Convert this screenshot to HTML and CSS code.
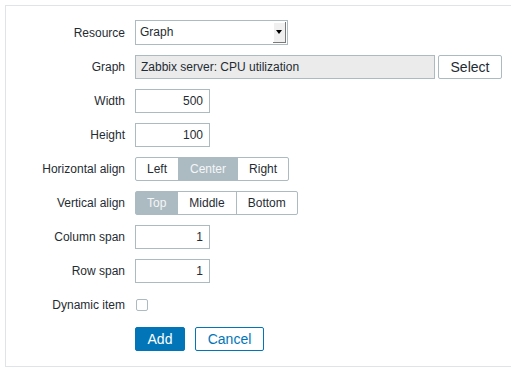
FILE: index.html
```html
<!DOCTYPE html>
<html lang="en">
<head>
  <meta charset="UTF-8">
  <meta name="viewport" content="width=device-width, initial-scale=1">
  <title>Edit widget</title>
  <link rel="stylesheet" href="styles.css">
</head>
<body>
  <div class="dialog">
    <form class="form-grid">
      <label class="form-label">Resource</label>
      <div class="form-field">
        <div class="select">
          <span class="select-value">Graph</span>
          <span class="select-arrow"></span>
        </div>
      </div>

      <label class="form-label">Graph</label>
      <div class="form-field">
        <input type="text" class="input input-readonly" value="Zabbix server: CPU utilization" readonly>
        <button type="button" class="btn btn-grey">Select</button>
      </div>

      <label class="form-label">Width</label>
      <div class="form-field"><input type="text" class="input input-num" value="500"></div>

      <label class="form-label">Height</label>
      <div class="form-field"><input type="text" class="input input-num" value="100"></div>

      <label class="form-label">Horizontal align</label>
      <div class="form-field">
        <ul class="segmented">
          <li>Left</li>
          <li class="selected">Center</li>
          <li>Right</li>
        </ul>
      </div>

      <label class="form-label">Vertical align</label>
      <div class="form-field">
        <ul class="segmented">
          <li class="selected">Top</li>
          <li>Middle</li>
          <li>Bottom</li>
        </ul>
      </div>

      <label class="form-label">Column span</label>
      <div class="form-field"><input type="text" class="input input-num" value="1"></div>

      <label class="form-label">Row span</label>
      <div class="form-field"><input type="text" class="input input-num" value="1"></div>

      <label class="form-label">Dynamic item</label>
      <div class="form-field"><span class="checkbox"></span></div>

      <span></span>
      <div class="form-field form-actions">
        <button type="button" class="btn btn-blue">Add</button>
        <button type="button" class="btn btn-alt">Cancel</button>
      </div>
    </form>
  </div>
</body>
</html>
```

FILE: styles.css
```css
body { margin: 0; background: #fff; overflow: hidden; font-family: "Liberation Sans", Arial, sans-serif; font-size: 12px; color: #1f2c33; }
.dialog { margin: 5px 0 0 5px; width: 530px; border: 1px solid #dfe4e7; padding: 14px 0 15px 0; box-sizing: border-box; }
.form-grid { display: grid; grid-template-columns: 119px auto; column-gap: 10px; row-gap: 10px; margin: 0; }
.form-label { justify-self: end; align-self: center; line-height: 14px; }
.form-field { display: flex; align-items: center; height: 24px; }
.form-field:first-of-type { height: 25px; }

.select { display: flex; align-items: stretch; width: 153px; height: 25px; border: 1px solid #acbbc2; box-sizing: border-box; background: #fff; }
.select-value { flex: 1; padding-left: 4px; line-height: 23px; }
.select-arrow { width: 13px; position: relative; background: #f0f0f0; box-shadow: inset -1px -1px 0 #7a7a7a, inset 1px 1px 0 #fff; margin: 1px 1px 1px 0; }
.select-arrow::after { content: ""; position: absolute; left: 3px; top: 8px; border-left: 3px solid transparent; border-right: 3px solid transparent; border-top: 4px solid #000; }

.input { height: 24px; box-sizing: border-box; border: 1px solid #acbbc2; background: #fff; color: #1f2c33; font: inherit; padding: 0 5px; margin: 0; outline: none; }
.input-readonly { width: 300px; background: #ebebeb; }
.input-num { width: 75px; text-align: right; padding-right: 6px; }

.btn { height: 24px; box-sizing: border-box; font-family: inherit; font-size: 14px; border-radius: 2px; padding: 0 12px; cursor: pointer; margin: 0; }
.btn-grey { margin-left: 3px; width: 64px; padding: 0; background: #fff; border: 1px solid #acbbc2; color: #1f2c33; }
.btn-blue { width: 50px; padding: 0; background: #0275b8; border: 1px solid #0275b8; color: #fff; }
.btn-alt { width: 69px; padding: 0; background: #fff; border: 1px solid #0275b8; color: #0275b8; }
.form-actions { gap: 10px; }

.segmented { display: flex; list-style: none; margin: 0; padding: 0; height: 24px; box-sizing: border-box; border: 1px solid #acbbc2; border-radius: 2px; }
.segmented li { padding: 0 11px; line-height: 22px; border-right: 1px solid #acbbc2; }
.segmented li:last-child { border-right: none; }
.segmented li.selected { background: #acbbc2; color: #f4f6f7; }

.checkbox { display: block; width: 12px; height: 12px; box-sizing: border-box; margin-left: 1px; border: 1px solid #acbbc2; border-radius: 2px; background: #fff; }
```
